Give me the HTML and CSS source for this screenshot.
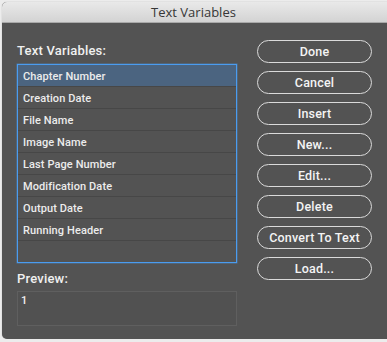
FILE: index.html
```html
<!DOCTYPE html>
<html>
<head>
<meta charset="utf-8">
<link rel="stylesheet" href="styles.css">
</head>
<body>
<div class="window">
  <div class="titlebar">Text Variables</div>
  <div class="content">
    <div class="left">
      <div class="label">Text Variables:</div>
      <div class="list">
        <div class="row selected">Chapter Number</div>
        <div class="row">Creation Date</div>
        <div class="row">File Name</div>
        <div class="row">Image Name</div>
        <div class="row">Last Page Number</div>
        <div class="row">Modification Date</div>
        <div class="row">Output Date</div>
        <div class="row">Running Header</div>
      </div>
      <div class="label preview-label">Preview:</div>
      <div class="preview">1</div>
    </div>
    <div class="buttons">
      <div class="btn">Done</div>
      <div class="btn">Cancel</div>
      <div class="btn">Insert</div>
      <div class="btn">New...</div>
      <div class="btn">Edit...</div>
      <div class="btn">Delete</div>
      <div class="btn">Convert To Text</div>
      <div class="btn">Load...</div>
    </div>
  </div>
</div>
</body>
</html>
```
FILE: styles.css
```css
html, body {
  margin: 0;
  padding: 0;
  background: #ececec;
  overflow: hidden;
}
body {
  font-family: Roboto, "Open Sans", sans-serif;
}
.window {
  margin: 2px 0 0 2px;
  width: 400px;
  height: 337px;
  background: #535353;
  border-radius: 5px 0 0 5px;
  overflow: hidden;
  box-shadow: 0 0 1px rgba(0,0,0,0.4);
}
.titlebar {
  height: 20px;
  line-height: 20px;
  background: linear-gradient(#e9e9e9, #d3d3d3);
  border-bottom: 1px solid #a9a9a9;
  color: #363636;
  font-family: "Open Sans", sans-serif;
  font-size: 13px;
  text-align: center;
  width: 383px;
  padding-right: 17px;
}
.content {
  display: flex;
  padding: 0 0 0 15px;
}
.left {
  width: 220px;
  padding-top: 19px;
}
.label {
  font-size: 13px;
  font-weight: 500;
  color: #f0f0f0;
  height: 18px;
  line-height: 18px;
  margin-bottom: 4px;
  letter-spacing: 0.2px;
}
.list {
  height: 197px;
  border: 1px solid #4a9cf0;
  box-shadow: 0 0 0 0.5px rgba(74,156,240,0.5);
}
.row {
  height: 21px;
  line-height: 23px;
  overflow: hidden;
  border-bottom: 1px solid #474747;
  padding-left: 5px;
  font-size: 11px;
  font-weight: 500;
  color: #ececec;
  letter-spacing: 0.1px;
}
.row.selected {
  background: #4b6480;
}
.preview-label {
  margin-top: 7px;
  margin-bottom: 3px;
  height: 18px;
}
.preview {
  border: 1px solid #5f5f5f;
  background: #515151;
  color: #f0f0f0;
  font-size: 11px;
  font-weight: 500;
  padding-left: 3px;
  line-height: 18px;
  box-sizing: border-box;
  height: 35px;
}
.buttons {
  margin-left: 20px;
  padding-top: 17px;
  display: flex;
  flex-direction: column;
  gap: 8px;
  width: 115px;
}
.btn {
  height: 23px;
  box-sizing: border-box;
  border: 1.5px solid #dadada;
  border-radius: 12px;
  color: #f4f4f4;
  font-size: 12.5px;
  font-weight: 500;
  text-align: center;
  line-height: 21px;
  letter-spacing: 0.2px;
}
```
